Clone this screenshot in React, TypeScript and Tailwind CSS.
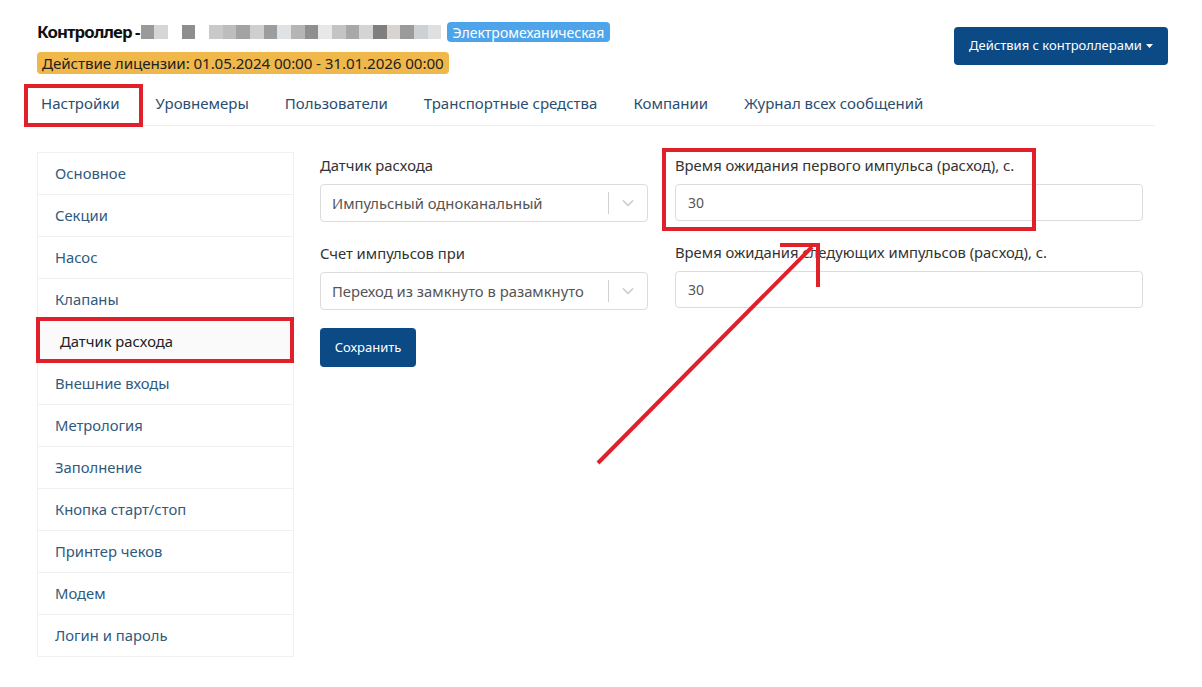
import React from "react";

const blur = [
  "#9a9a9a", "#d6d6d6", "#ffffff", "#8e8e8e", "#ffffff", "#c9c9c9", "#bdbdbd", "#a3a3a3",
  "#cfcfcf", "#9d9d9d", "#dfe3e6", "#b5b5b5", "#8f8f8f", "#e8e8e8", "#c4c4c4", "#a8a8a8",
  "#d4d4d4", "#7f7f7f", "#d9d4cf", "#9b9b9b", "#cdd0d4", "#e0e0e0",
];

const tabs = ["Настройки", "Уровнемеры", "Пользователи", "Транспортные средства", "Компании", "Журнал всех сообщений"];

const menu = [
  "Основное", "Секции", "Насос", "Клапаны", "Датчик расхода", "Внешние входы",
  "Метрология", "Заполнение", "Кнопка старт/стоп", "Принтер чеков", "Модем", "Логин и пароль",
];

function Select({ value }: { value: string }) {
  return (
    <div className="flex items-center h-[38px] rounded border border-[#dcdcdc] bg-white pl-[11px]">
      <span className="flex-1 text-[14.8px] text-[#555] whitespace-nowrap">{value}</span>
      <span className="w-px h-[22px] bg-[#d0d0d0]" />
      <span className="w-[38px] flex justify-center">
        <svg width="12" height="8" viewBox="0 0 12 8" fill="none" stroke="#c8c8c8" strokeWidth="1.5">
          <path d="M1 1.5l5 5 5-5" />
        </svg>
      </span>
    </div>
  );
}

export default function App() {
  return (
    <div className="relative w-[1202px] h-[687px] bg-white text-[#333] overflow-hidden" style={{ fontFamily: '"Noto Sans", "Open Sans", sans-serif' }}>
      <div className="flex items-start justify-between pl-[37px] pr-[34px] pt-[21px]">
        <div className="flex flex-col">
          <div className="flex items-center h-[22px]">
            <span className="text-[16.8px] font-bold text-[#111] tracking-[-0.9px]">Контроллер -</span>
            <span className="flex items-center ml-[1px] h-[14px] w-[301px]">
              {blur.map((c, i) => (
                <span key={i} className="h-[14px] w-[13.68px]" style={{ background: c }} />
              ))}
            </span>
            <span className="ml-[5px] rounded bg-[#4ea4ea] text-white text-[14px] px-[6px] h-[20px] flex items-center">
              Электромеханическая
            </span>
          </div>
          <div className="mt-[9px] self-start rounded bg-[#f0b84a] text-[#222] text-[15.2px] tracking-[-0.1px] px-[5px] h-[22px] flex items-center">
            Действие лицензии: 01.05.2024 00:00 - 31.01.2026 00:00
          </div>
        </div>
        <button className="mt-[6px] h-[38px] w-[214px] rounded bg-[#0b4a85] text-white text-[13px] flex items-center justify-center gap-[4px]">
          Действия с контроллерами
          <svg width="7" height="4" viewBox="0 0 7 4"><path d="M0 0h7L3.5 4z" fill="#fff" /></svg>
        </button>
      </div>

      <div className="ml-[20px] w-[1135px] mt-[9px] flex items-center h-[43px] pb-[2px] border-b border-[#eeeeee]">
        {tabs.map((t, i) => (
          <span key={t} className={`text-[15px] text-[#2b4e6e] ${i === 0 ? "pl-[21px] pr-[36px]" : "pr-[36px]"}`}>
            {t}
          </span>
        ))}
      </div>

      <div className="flex pl-[37px] mt-[26px]">
        <div className="w-[257px] flex flex-col">
          {menu.map((m, i) => (
            <div
              key={m}
              className={`h-[43px] flex items-center border border-[#f0f0f0] -mt-px first:mt-0 text-[14.8px] ${
                i === 4 ? "pl-[22px] text-[#222] bg-[#fafafa]" : "pl-[17px] text-[#2f5a7e]"
              }`}
            >
              {m}
            </div>
          ))}
        </div>

        <div className="w-[328px] ml-[26px] pt-[2px] flex flex-col">
          <div className="text-[14.8px] text-[#333] h-[20px]">Датчик расхода</div>
          <div className="mt-[10px]"><Select value="Импульсный одноканальный" /></div>
          <div className="text-[14.8px] text-[#333] h-[20px] mt-[20px]">Счет импульсов при</div>
          <div className="mt-[10px]"><Select value="Переход из замкнуто в разамкнуто" /></div>
          <button className="mt-[18px] self-start h-[39px] w-[96px] rounded bg-[#0b4a85] text-white text-[13px]">
            Сохранить
          </button>
        </div>

        <div className="w-[468px] ml-[27px] pt-[2px] flex flex-col">
          <div className="text-[14.8px] text-[#333] h-[20px]">Время ожидания первого импульса (расход), с.</div>
          <div className="mt-[10px] h-[37px] rounded border border-[#dcdcdc] flex items-center pl-[12px] text-[14px] text-[#555]">30</div>
          <div className="text-[14.8px] text-[#333] h-[20px] mt-[20px]">Время ожидания следующих импульсов (расход), с.</div>
          <div className="mt-[10px] h-[37px] rounded border border-[#dcdcdc] flex items-center pl-[12px] text-[14px] text-[#555]">30</div>
        </div>
      </div>

      <svg className="absolute inset-0 pointer-events-none" width="1202" height="687" viewBox="0 0 1202 687">
        <g fill="none" stroke="#e0202a" strokeWidth="4">
          <rect x="26" y="86" width="115" height="39" />
          <rect x="38" y="319" width="254" height="42" />
          <rect x="664" y="150" width="370" height="79" />
        </g>
        <g stroke="#e0202a" strokeWidth="4" strokeLinecap="butt">
          <line x1="598" y1="463" x2="812" y2="247" />
          <line x1="780" y1="245" x2="820" y2="245" />
          <line x1="818" y1="243" x2="818" y2="287" />
        </g>
      </svg>
    </div>
  );
}
